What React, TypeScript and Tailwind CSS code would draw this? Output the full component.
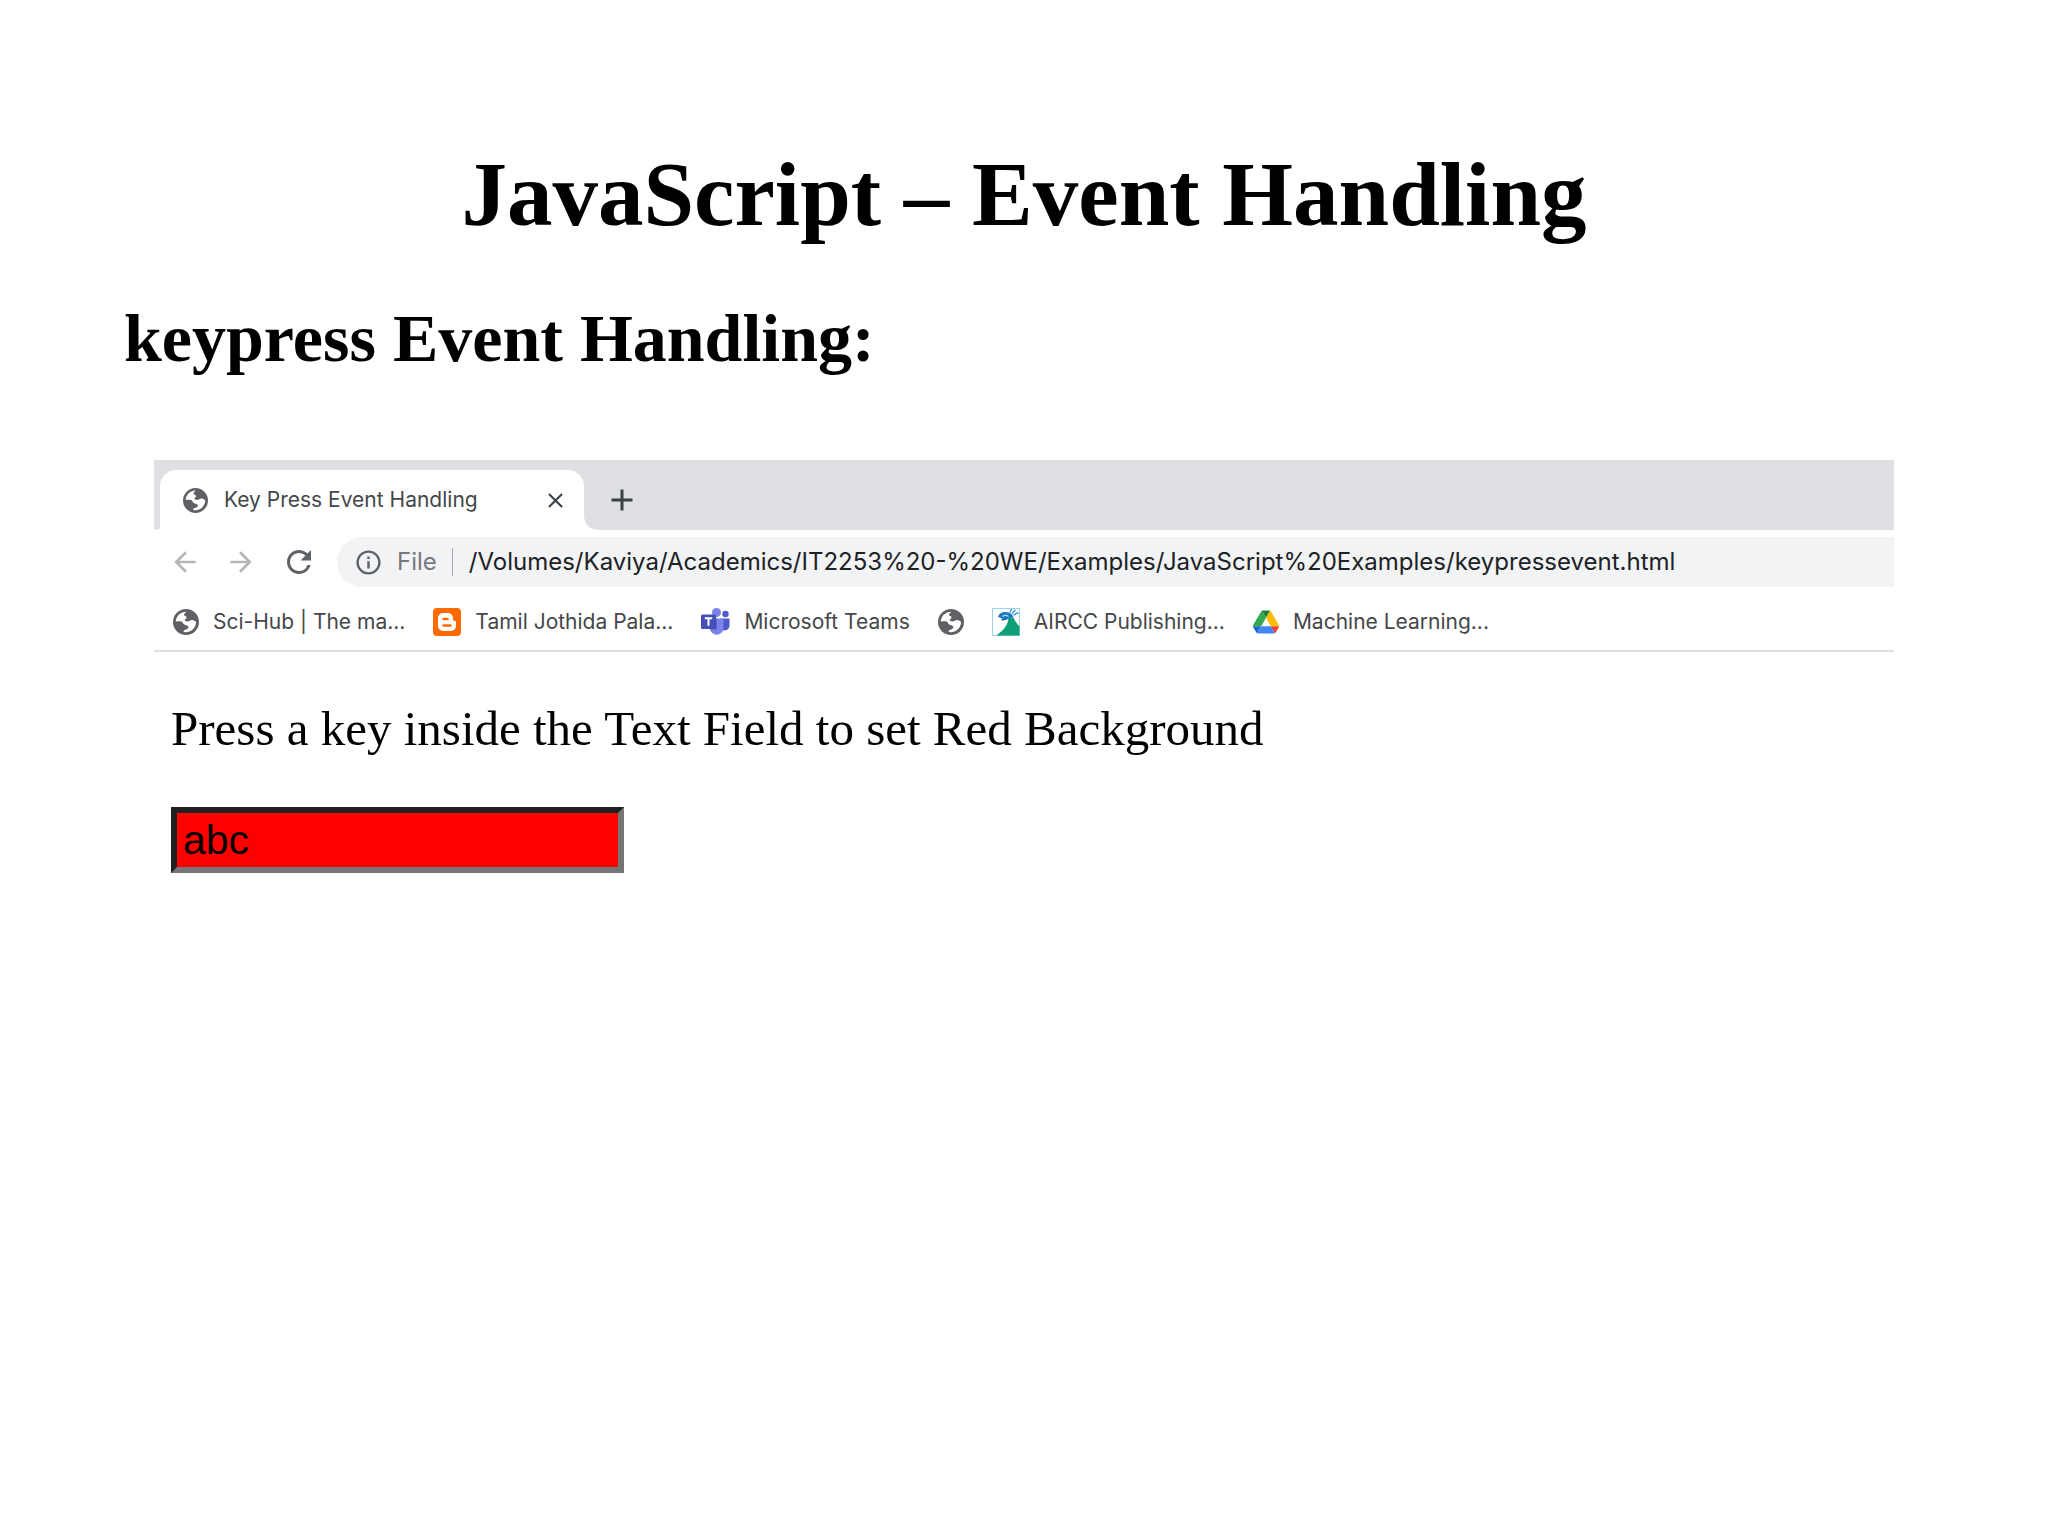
import type { ReactNode } from 'react';
import { MdRefresh, MdInfoOutline, MdAdd, MdClose, MdArrowBack, MdArrowForward } from 'react-icons/md';

type IconProps = { className?: string };

export default function App() {
  return (
    <main className="min-h-screen bg-white text-black">
      <h1 className="pt-[140px] text-center font-['Liberation_Serif',serif] text-[91px] leading-[110px] font-bold">
        JavaScript – Event Handling
      </h1>
      <h2 className="px-[124px] pt-[48px] font-['Liberation_Serif',serif] text-[68px] leading-[80px] font-bold">
        keypress Event Handling:
      </h2>
      <section className="mx-[154px] mt-[82px] font-[Inter,sans-serif]">
        <TabStrip />
        <Toolbar />
        <BookmarksBar />
        <PageContent />
      </section>
    </main>
  );
}

function TabStrip() {
  return (
    <div className="flex h-[70px] items-end bg-[#dfe0e4]">
      <TabFoot className="-scale-x-100" />
      <div className="-ml-[8px] flex h-[60px] w-[424px] items-center rounded-t-2xl bg-white pr-[16px] pl-[23px]">
        <Globe className="size-[25px] shrink-0" />
        <span className="ml-[16px] flex-1 text-[21px] text-[#45474a]">Key Press Event Handling</span>
        <button aria-label="Close tab" className="text-[#3c4043]">
          <MdClose className="size-[25px]" />
        </button>
      </div>
      <TabFoot />
      <button aria-label="New tab" className="mb-[12px] ml-[6px] text-[#3c4043]">
        <MdAdd className="size-[36px]" />
      </button>
    </div>
  );
}

// concave corner where the tab meets the toolbar
function TabFoot({ className = '' }: IconProps) {
  return (
    <svg viewBox="0 0 14 14" className={`size-[14px] shrink-0 ${className}`}>
      <path d="M0 0Q1 13 14 14H0Z" fill="#fff" />
    </svg>
  );
}

function Toolbar() {
  return (
    <div className="flex items-center pt-[7px] pl-[15px]">
      <button aria-label="Back" className="text-[#b5b6b8]">
        <MdArrowBack className="size-[32px]" />
      </button>
      <button aria-label="Forward" className="ml-[24px] text-[#b5b6b8]">
        <MdArrowForward className="size-[32px]" />
      </button>
      <button aria-label="Reload" className="ml-[24px] text-[#5f6368]">
        <MdRefresh className="size-[36px]" />
      </button>
      <div className="ml-[20px] flex h-[50px] flex-1 items-center rounded-l-full bg-[#f1f3f4] pl-[17px] text-[24px]">
        <MdInfoOutline className="size-[29px] shrink-0 text-[#5f6368]" />
        <span className="ml-[14px] text-[#77797c]">File</span>
        <span className="ml-[15px] h-[28px] w-px bg-[#a8aaad]" />
        <input
          aria-label="Address"
          className="ml-[16px] min-w-0 flex-1 bg-transparent text-[#202124] outline-none"
          defaultValue="/Volumes/Kaviya/Academics/IT2253%20-%20WE/Examples/JavaScript%20Examples/keypressevent.html"
        />
      </div>
    </div>
  );
}

function BookmarksBar() {
  return (
    <nav className="flex h-[65px] items-center border-b-2 border-[#dedfe1] pt-[6px] pl-[19px] text-[21px] text-[#45474a]">
      <Bookmark icon={<Globe className="size-[26px]" />} label="Sci-Hub | The ma..." />
      <Bookmark icon={<Blogger className="size-[28px]" />} label="Tamil Jothida Pala..." />
      <Bookmark icon={<Teams className="size-[29px]" />} label="Microsoft Teams" />
      <Bookmark icon={<Globe className="size-[26px]" />} />
      <Bookmark icon={<Aircc className="size-[28px]" />} label="AIRCC Publishing..." />
      <Bookmark icon={<Drive className="size-[26px]" />} label="Machine Learning..." />
    </nav>
  );
}

function Bookmark({ icon, label }: { icon: ReactNode; label?: string }) {
  return (
    <a href="#" aria-label={label ?? 'Bookmark'} className="mr-[28px] flex items-center gap-[14px] whitespace-nowrap">
      {icon}
      {label && <span>{label}</span>}
    </a>
  );
}

function PageContent() {
  return (
    <div className="px-[17px] pt-[47px]">
      <label htmlFor="key-field" className="block font-['Liberation_Serif',serif] text-[49px] leading-[60px]">
        Press a key inside the Text Field to set Red Background
      </label>
      <input
        id="key-field"
        className="mt-[48px] block h-[66px] w-[453px] border-[6px] border-t-[#212121] border-r-[#767676] border-b-[#767676] border-l-[#212121] bg-[#ff0000] px-[6px] font-['Liberation_Sans',sans-serif] text-[41px] outline-none"
        defaultValue="abc"
      />
    </div>
  );
}

function Globe({ className }: IconProps) {
  return (
    <svg viewBox="0 0 26 26" className={className}>
      <circle cx="13" cy="13" r="13" fill="#5f6165" />
      <path
        d="M2.800 12.500C3 7 7.500 2.800 13.200 2.700c-.4 1.300-2.200 1.500-2.200 3 0 1.600 2.600 1 2.600 2.800 0 1.300-1.800 1.300-1.800 2.500 0 1 1.200 1.400 2.800 1.400 1.800 0 2.600-1.400 4.600-1.400 1.600 0 2.800 1 3.900 2-.2 5.300-4.300 9.700-9.600 10.200-1.200.1-2.200 0-3-.4 0-1.500 1.200-1.800 2.600-2.200 1.500-.5 2.300-1.300 2.300-2.500 0-1.700-2.600-1.600-4.200-2.600-1.300-.8-1.200-2.500-2.800-3-1.600-.5-3.600 0-5.600 0Z"
        fill="#fff"
      />
    </svg>
  );
}

function Blogger({ className }: IconProps) {
  return (
    <svg viewBox="0 0 28 28" className={className}>
      <rect width="28" height="28" rx="4" fill="#ff6a00" />
      <path d="M10 5h5a5 5 0 0 1 5 5v1.500c0 1 .5 1.200 1.500 1.200s1.500.6 1.500 1.500V18a5 5 0 0 1-5 5h-8a5 5 0 0 1-5-5v-8a5 5 0 0 1 5-5Z" fill="#fff" />
      <path d="M10.500 11h4M10.500 17.500h7" stroke="#ff6a00" strokeWidth="2.600" strokeLinecap="round" />
    </svg>
  );
}

function Teams({ className }: IconProps) {
  return (
    <svg viewBox="0 0 29 29" className={className}>
      <circle cx="24.500" cy="7" r="3.200" fill="#5059c9" />
      <path d="M19 11.500h9.500V19a4.500 4.500 0 0 1-7.500 3.300Z" fill="#5059c9" />
      <circle cx="15.500" cy="5.500" r="4.500" fill="#7b83eb" />
      <path d="M9 11.500h13.500V21a6.700 6.700 0 0 1-13.500 0Z" fill="#7b83eb" />
      <path d="M9 11.500h7v11H9Z" fill="#5a62c3" />
      <rect x="0" y="7.500" width="15" height="14.500" rx="1.500" fill="#464eb8" />
      <path d="M3.800 11.200h7.400M7.500 11.200v7.600" stroke="#fff" strokeWidth="2" />
    </svg>
  );
}

function Aircc({ className }: IconProps) {
  return (
    <svg viewBox="0 0 28 28" className={className}>
      <rect x=".5" y=".5" width="27" height="27" fill="#fff" stroke="#9fd0ea" />
      <path d="M16.500 10c2-.6 3.500-.6 5 0 1.500 3 3.500 6 6 8.500V27.500H4C8 25 16 19 16.500 10Z" fill="#0d9f75" />
      <path d="M6 9c1-4.500 6-6 11-4.500 2.500 1 4.500 3 4.500 6.500-1-1.500-3-1.800-4.500-.8-3 2.200-5.500 2.600-8 2 1-.8 1.300-1.700.5-2.200-1.200-.6-2.300-.2-3.500-1Z" fill="#1c79c0" />
      <path d="M10.500 8.500c2-1.500 4-1.500 6 0" stroke="#a9dcf5" strokeWidth="1.200" fill="none" />
      <path d="M18 4.500 19.500 1M20 5.500l3.500-3.500M21.500 7l5-2.500" stroke="#3b9bd6" strokeWidth="1.500" />
    </svg>
  );
}

function Drive({ className }: IconProps) {
  return (
    <svg viewBox="0 0 87.300 78" className={className}>
      <path d="m6.600 66.850 3.850 6.650c.8 1.400 1.950 2.500 3.300 3.300l13.750-23.800H0c0 1.550.4 3.100 1.200 4.500z" fill="#1967d2" />
      <path d="m43.650 25-13.750-23.800c-1.350.8-2.500 1.900-3.300 3.300L1.200 48.500A9.060 9.060 0 0 0 0 53h27.500z" fill="#34a853" />
      <path d="m73.550 76.800c1.350-.8 2.500-1.900 3.300-3.300l1.600-2.750 7.650-13.250c.8-1.400 1.200-2.950 1.200-4.500H59.800l5.850 11.500z" fill="#ea4335" />
      <path d="M43.650 25 57.400 1.200C56.050.4 54.500 0 52.900 0H34.400c-1.600 0-3.150.45-4.500 1.200z" fill="#188038" />
      <path d="M59.800 53H27.500L13.750 76.800c1.350.8 2.900 1.200 4.500 1.200h50.800c1.600 0 3.150-.45 4.500-1.200z" fill="#4285f4" />
      <path d="M73.400 26.500 60.700 4.500c-.8-1.400-1.950-2.500-3.300-3.300L43.650 25 59.800 53h27.450c0-1.550-.4-3.100-1.200-4.500z" fill="#fbbc04" />
    </svg>
  );
}
